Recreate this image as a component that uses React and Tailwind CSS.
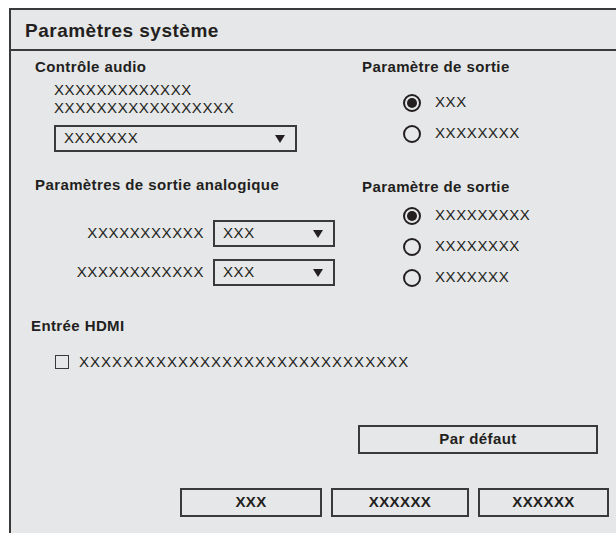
import React from 'react';

const ink = 'text-[#231f20]';

function Select({ value, width }) {
  return (
    <div className={`flex items-center justify-between h-[27px] ${width} border-2 border-[#3a3a3a] pl-[8px] pr-[10px]`}>
      <span className="text-[15px] tracking-[0.6px]">{value}</span>
      <svg width="10" height="8" viewBox="0 0 10 8">
        <polygon points="0,0 10,0 5,8" fill="#231f20" />
      </svg>
    </div>
  );
}

function Radio({ checked, label }) {
  return (
    <div className="flex items-center h-[31px] pl-[41px] gap-[14px]">
      <span className="flex items-center justify-center w-[18px] h-[18px] rounded-full border-2 border-[#231f20]">
        {checked && <span className="w-[10px] h-[10px] rounded-full bg-[#231f20]" />}
      </span>
      <span className="text-[15px] tracking-[0.6px]">{label}</span>
    </div>
  );
}

function Button({ children, width }) {
  return (
    <button className={`flex items-center justify-center h-[29px] ${width} border-2 border-[#3a3a3a] text-[15px] font-bold tracking-[0.4px]`}>
      {children}
    </button>
  );
}

export default function App() {
  return (
    <div
      className={`w-[616px] h-[533px] overflow-hidden bg-white ${ink}`}
      style={{ fontFamily: '"Liberation Sans", Arial, sans-serif' }}
    >
      <div className="ml-[9px] mt-[8px] w-[620px] h-[540px] bg-[#e6e7e8] border-l-2 border-t-2 border-[#3a3a3a]">
        {/* Title bar */}
        <div className="h-[41px] flex items-center pl-[14px] pt-[4px] border-b-2 border-[#3a3a3a]">
          <h1 className="text-[19px] font-bold tracking-[0.5px]">Paramètres système</h1>
        </div>

        {/* Audio control + output */}
        <div className="flex">
          <div className="w-[351px] pl-[24px] pt-[6px]">
            <div className="text-[15px] font-bold tracking-[0.4px] leading-[20px]">Contrôle audio</div>
            <div className="pl-[19px] mt-[4px] text-[15px] tracking-[0.6px] leading-[18px]">
              <div>XXXXXXXXXXXXX</div>
              <div>XXXXXXXXXXXXXXXXX</div>
            </div>
            <div className="pl-[19px] mt-[8px]">
              <Select value="XXXXXXX" width="w-[243px]" />
            </div>
          </div>
          <div className="pt-[6px]">
            <div className="text-[15px] font-bold tracking-[0.4px] leading-[20px]">Paramètre de sortie</div>
            <div className="mt-[10px]">
              <Radio checked label="XXX" />
              <Radio label="XXXXXXXX" />
            </div>
          </div>
        </div>

        {/* Analog output + output */}
        <div className="flex mt-[23px]">
          <div className="w-[351px] pl-[24px]">
            <div className="text-[15px] font-bold tracking-[0.4px] leading-[20px]">Paramètres de sortie analogique</div>
            <div className="mt-[25px] flex flex-col gap-[12px]">
              {['XXXXXXXXXXX', 'XXXXXXXXXXXX'].map((label) => (
                <div key={label} className="flex items-center gap-[9px]">
                  <span className="w-[169px] text-right text-[15px] tracking-[0.6px]">{label}</span>
                  <Select value="XXX" width="w-[122px]" />
                </div>
              ))}
            </div>
          </div>
          <div className="pt-[2px]">
            <div className="text-[15px] font-bold tracking-[0.4px] leading-[20px]">Paramètre de sortie</div>
            <div className="mt-[3px] flex flex-col">
              <Radio checked label="XXXXXXXXX" />
              <Radio label="XXXXXXXX" />
              <Radio label="XXXXXXX" />
            </div>
          </div>
        </div>

        {/* HDMI */}
        <div className="pl-[20px] mt-[23px]">
          <div className="text-[15px] font-bold tracking-[0.4px] leading-[20px]">Entrée HDMI</div>
          <div className="flex items-center h-[20px] mt-[16px] pl-[24px] gap-[10px]">
            <span className="w-[14px] h-[14px] border-[1.5px] border-[#3a3a3a]" />
            <span className="text-[15px] tracking-[1px]">XXXXXXXXXXXXXXXXXXXXXXXXXXXXXX</span>
          </div>
        </div>

        {/* Buttons */}
        <div className="pl-[347px] mt-[53px]">
          <Button width="w-[240px]">Par défaut</Button>
        </div>
        <div className="flex pl-[169px] mt-[34px] gap-[9px]">
          <Button width="w-[142px]">XXX</Button>
          <Button width="w-[138px]">XXXXXX</Button>
          <Button width="w-[131px]">XXXXXX</Button>
        </div>
      </div>
    </div>
  );
}
